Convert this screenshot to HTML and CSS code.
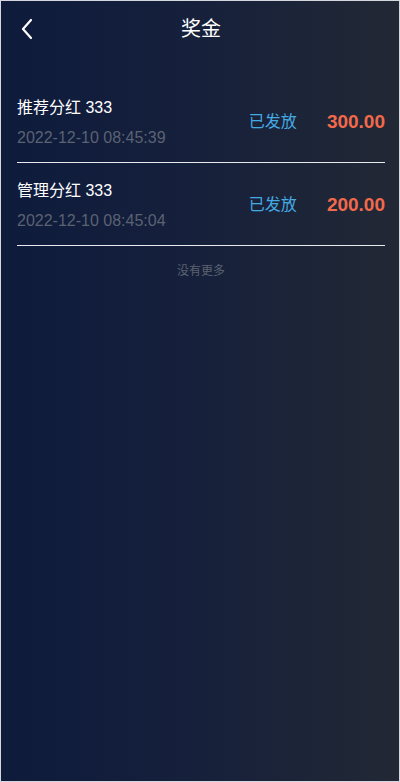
FILE: index.html
```html
<!DOCTYPE html>
<html lang="zh">
<head>
<meta charset="utf-8">
<title>奖金</title>
<link rel="stylesheet" href="styles.css">
</head>
<body>
<div class="page">
  <header class="header">
    <div class="back">
      <svg width="14" height="22" viewBox="0 0 14 22"><path d="M11 2 L3 11 L11 20" fill="none" stroke="#ffffff" stroke-width="2.2" stroke-linecap="round" stroke-linejoin="round"/></svg>
    </div>
    <div class="title">奖金</div>
    <div></div>
  </header>
  <div class="list">
    <div class="row">
      <div class="info">
        <div class="name">推荐分红 333</div>
        <div class="date">2022-12-10 08:45:39</div>
      </div>
      <div class="status">已发放</div>
      <div class="amount">300.00</div>
    </div>
    <div class="row">
      <div class="info">
        <div class="name">管理分红 333</div>
        <div class="date">2022-12-10 08:45:04</div>
      </div>
      <div class="status">已发放</div>
      <div class="amount">200.00</div>
    </div>
    <div class="more">没有更多</div>
  </div>
</div>
</body>
</html>
```

FILE: styles.css
```css
html, body {
  margin: 0;
  padding: 0;
}
body {
  font-family: "Liberation Sans", "Noto Sans CJK SC", sans-serif;
}
.page {
  width: 400px;
  height: 782px;
  box-sizing: border-box;
  border: 1px solid #d4d7dd;
  background: linear-gradient(90deg, #0e1b3b 0%, #141f3c 40%, #1c2438 75%, #222834 100%);
  color: #ffffff;
}
.header {
  height: 55px;
  display: grid;
  grid-template-columns: 1fr auto 1fr;
  align-items: center;
}
.back {
  padding-left: 19px;
  display: flex;
  align-items: center;
}
.title {
  font-size: 20px;
  line-height: 24px;
  color: #ffffff;
  padding-left: 2px;
}
.list {
  margin-top: 24px;
  padding: 0 14px 0 16px;
}
.row {
  display: flex;
  align-items: center;
  padding: 17px 0 13px;
  border-bottom: 1px solid #e8eaee;
}
.info {
  flex: 1;
}
.name {
  font-size: 16px;
  line-height: 22px;
  color: #ffffff;
}
.date {
  font-size: 16px;
  line-height: 22px;
  margin-top: 8px;
  color: #5b6272;
}
.status {
  font-size: 16px;
  line-height: 22px;
  color: #45a9e2;
  margin-right: 30px;
  margin-bottom: 2px;
}
.amount {
  font-size: 19px;
  font-weight: bold;
  line-height: 22px;
  color: #f2694b;
  margin-bottom: 3px;
}
.more {
  text-align: center;
  font-size: 12px;
  line-height: 16px;
  color: #5c6372;
  margin-top: 17px;
}
```
